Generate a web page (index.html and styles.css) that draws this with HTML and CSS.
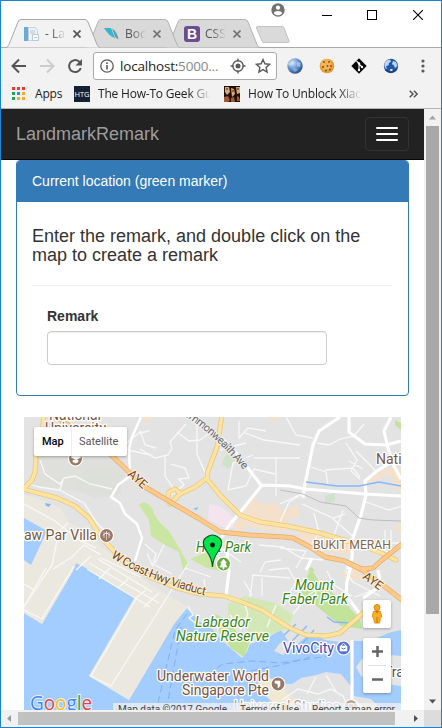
FILE: index.html
```html
<!DOCTYPE html>
<html lang="en">
<head>
<meta charset="utf-8">
<title>LandmarkRemark</title>
<link rel="stylesheet" href="styles.css">
</head>
<body>
<div class="window">
  <header class="titlebar">
    <div class="controls">
      <svg class="account" width="14" height="14" viewBox="0 0 14 14"><circle cx="7" cy="7" r="6.7" fill="#727272"/><circle cx="7" cy="4.7" r="2.1" fill="#fff"/><path d="M2.8 10.2c1-3 7.400-3 8.400 0-2 2.700-6.400 2.700-8.400 0z" fill="#fff"/></svg>
      <svg class="min" width="10" height="10"><path d="M0 5.500h10" stroke="#000"/></svg>
      <svg class="max" width="10" height="10"><rect x=".5" y=".5" width="9" height="9" fill="none" stroke="#000"/></svg>
      <svg class="close" width="10" height="10"><path d="M0 0l10 10M10 0L0 10" stroke="#000" stroke-width="1.100"/></svg>
    </div>
    <div class="tabs">
      <div class="tab active">
        <svg class="shape" width="95" height="29" viewBox="0 0 95 29"><path d="M0 28.500Q2 28 3 25.500L12 3Q13 .5 15 .5H79Q81 .5 82 3L91 25.500Q92 28 94 28.500" fill="#f2f2f2" stroke="#a9a9a9"/></svg>
        <svg class="fav" width="16" height="16" viewBox="0 0 16 16"><path d="M0 1h4v14H0z" fill="#6aaad6"/><path d="M4.500 1.500h7l2 3v10h-9z" fill="#eef2f6" stroke="#c5d0db"/><path d="M6 5h5M6 7h5" stroke="#b9c8d6"/><path d="M8.500 8.500h6v6h-6z" fill="#f8fafc" stroke="#bac7d4"/><path d="M10 11.500h3" stroke="#b9c8d6"/></svg>
        <span class="title">- La</span>
        <svg class="x" width="8" height="8"><path d="M.5.5l7 7M7.500.5l-7 7" stroke="#555" stroke-width="1.700"/></svg>
      </div>
      <div class="tab second">
        <svg class="shape" width="95" height="29" viewBox="0 0 95 29"><path d="M0 28.500Q2 28 3 25.500L12 3Q13 .5 15 .5H79Q81 .5 82 3L91 25.500Q92 28 94 28.500" fill="#d9d9d9" stroke="#b2b2b2"/></svg>
        <svg class="fav" width="16" height="16" viewBox="0 0 16 16"><path d="M0 2h7l4 10C7 11 3 7 0 2z" fill="#35b5d0"/><path d="M8 2.500q5 3 6.500 11l-3-2z" fill="#5b9daa"/></svg>
        <span class="title">Boc</span>
        <svg class="x" width="8" height="8"><path d="M.5.5l7 7M7.500.5l-7 7" stroke="#777" stroke-width="1.700"/></svg>
      </div>
      <div class="tab third">
        <svg class="shape" width="95" height="29" viewBox="0 0 95 29"><path d="M0 28.500Q2 28 3 25.500L12 3Q13 .5 15 .5H79Q81 .5 82 3L91 25.500Q92 28 94 28.500" fill="#d9d9d9" stroke="#b2b2b2"/></svg>
        <span class="fav bs">B</span>
        <span class="title">CSS</span>
        <svg class="x" width="8" height="8"><path d="M.5.5l7 7M7.500.5l-7 7" stroke="#777" stroke-width="1.700"/></svg>
      </div>
      <svg class="newtab" width="36" height="18" viewBox="0 0 36 18"><path d="M3 .5H27Q28.500.5 29 2L34 15Q34.500 16.500 33 16.500H9Q7.500 16.500 7 15L1.500 2Q1 .5 3 .5z" fill="#dadada" stroke="#c2c2c2"/></svg>
    </div>
  </header>

  <div class="toolbar">
    <svg class="nav" width="16" height="16" viewBox="0 0 16 16"><path d="M15 8H2M8 1.500L1.500 8 8 14.500" fill="none" stroke="#555" stroke-width="2"/></svg>
    <svg class="nav" width="16" height="16" viewBox="0 0 16 16"><path d="M1 8h13M8 1.500L14.500 8 8 14.500" fill="none" stroke="#ccc" stroke-width="2"/></svg>
    <svg class="nav" width="16" height="16" viewBox="0 0 16 16"><path d="M13.800 10A6 6 0 1 1 12 3.500L14 5.300" fill="none" stroke="#555" stroke-width="2"/><path d="M15 1v6.500H8.500z" fill="#555"/></svg>
    <div class="omnibox">
      <svg width="14" height="14" viewBox="0 0 14 14"><circle cx="7" cy="7" r="6.200" fill="none" stroke="#5a5a5a" stroke-width="1.300"/><path d="M7 6v4.500M7 3.300v1.600" stroke="#5a5a5a" stroke-width="1.600"/></svg>
      <span class="url">localhost:<i>5000...</i></span>
      <svg class="locate" width="16" height="16" viewBox="0 0 16 16"><circle cx="8" cy="8" r="5.200" fill="none" stroke="#5a5a5a" stroke-width="1.400"/><circle cx="8" cy="8" r="2.500" fill="#5a5a5a"/><path d="M8 .5v3M8 12.500v3M.5 8h3M12.500 8h3" stroke="#5a5a5a" stroke-width="1.400"/></svg>
      <svg class="star" width="16" height="16" viewBox="0 0 16 16"><path d="M8 1.500l1.900 4.300 4.700.5-3.500 3.100 1 4.600L8 11.600 3.900 14l1-4.600L1.400 6.300l4.700-.5z" fill="none" stroke="#5a5a5a" stroke-width="1.400"/></svg>
    </div>
    <svg class="ext" width="16" height="16" viewBox="0 0 16 16"><defs><radialGradient id="gl" cx=".35" cy=".3" r=".75"><stop offset="0" stop-color="#d5e5f8"/><stop offset=".55" stop-color="#638fcf"/><stop offset="1" stop-color="#23498b"/></radialGradient></defs><circle cx="8" cy="8" r="7.700" fill="url(#gl)"/><path d="M1 5l4-2 2 2-3 3-3-1zM10 4l4 1-1 4-3-1z" fill="#d5e5f5" opacity=".5"/><path d="M5 11l3-1 3 2-3 2z" fill="#9fbee4" opacity=".6"/></svg>
    <svg class="ext" width="16" height="16" viewBox="0 0 16 16"><circle cx="8" cy="8" r="7.300" fill="#e39b35"/><circle cx="7" cy="6.500" r="5.500" fill="#f0b355"/><g fill="#87491a"><circle cx="5" cy="4" r=".9"/><circle cx="10" cy="4" r=".9"/><circle cx="4" cy="9" r="1"/><circle cx="8.500" cy="8" r=".9"/><circle cx="12" cy="8" r=".9"/><circle cx="7" cy="12.500" r=".9"/><circle cx="11" cy="11.500" r=".9"/></g></svg>
    <svg class="ext" width="16" height="16" viewBox="0 0 16 16"><path d="M8 .3L15.700 8 8 15.700.3 8z" fill="#050505"/><path d="M5.500 3L8 5.500V12M8 6l3 3" fill="none" stroke="#fff" stroke-width="1.100"/><g fill="#fff"><circle cx="8" cy="5.500" r="1.200"/><circle cx="8" cy="12" r="1.200"/><circle cx="11" cy="9" r="1.200"/></g></svg>
    <svg class="ext" width="16" height="16" viewBox="0 0 16 16"><circle cx="8" cy="8" r="7.200" fill="#2358a8"/><path d="M2 4.500Q4 1.500 7 1.500L8 3.500 6 5 5.500 7.500 3 8 4 11 2 10Q.5 7 2 4.500zM10 3l3 1 1.500 4-2.500 2-1-2.500-2-1.500z" fill="#bcd5ef"/><path d="M7 11l2.500 0 0 2.500-2 1z" fill="#d7e6f6"/><path d="M2.500 12q5.500 4.500 11-.5" stroke="#163d82" fill="none" stroke-width="1.500"/></svg>
    <svg class="dots" width="4" height="14" viewBox="0 0 4 14"><g fill="#5a5a5a"><circle cx="2" cy="2" r="1.600"/><circle cx="2" cy="7" r="1.600"/><circle cx="2" cy="12" r="1.600"/></g></svg>
  </div>

  <div class="bookmarks">
    <svg class="apps" width="13" height="13" viewBox="0 0 13 13"><path d="M0 0h3v3H0zM5 0h3v3H5zM10 0h3v3h-3z" fill="#e83b32"/><path d="M0 5h3v3H0zM0 10h3v3H0z" fill="#20a35b"/><path d="M5 5h3v3H5z" fill="#3c83ef"/><path d="M10 5h3v3h-3zM5 10h3v3H5zM10 10h3v3h-3z" fill="#f5ac25"/></svg>
    <span class="bm b1">Apps</span>
    <span class="htg">HTG</span>
    <span class="bm b2">The How-To Geek Gui</span>
    <svg class="photo" width="16" height="16" viewBox="0 0 16 16"><path fill="#241008" d="M0 0h16v16H0z"/><path d="M1 1h4l1 5-3 3-2-3zM7 2l3 1 1 5-3 3zM12 1h4v6l-3 1z" fill="#d5a877"/><path d="M0 11l4-1 2 4-2 2H0zM7 12l3-1 1 5H7zM13 10l2 1 1 4h-3z" fill="#a05a34"/><path d="M2 3h2M8 5h2M13 3h2" stroke="#361d0e"/></svg>
    <span class="bm b3">How To Unblock Xiaoc</span>
    <svg class="more" width="9" height="8" viewBox="0 0 9 8"><path d="M.7.7L4 4 .7 7.300M4.900.7L8.200 4 4.900 7.300" fill="none" stroke="#555" stroke-width="1.500"/></svg>
  </div>

  <div class="viewport">
    <main class="page">
      <nav class="navbar">
        <span class="brand">LandmarkRemark</span>
        <button class="toggle" aria-label="Menu"><i></i><i></i><i></i></button>
      </nav>
      <section class="panel">
        <div class="heading">Current location (green marker)</div>
        <div class="body">
          <h4>Enter the remark, and double click on the map to create a remark</h4>
          <hr>
          <div class="group">
            <label for="remark">Remark</label>
            <input id="remark" type="text">
          </div>
        </div>
      </section>
      <div class="map">
        <svg class="canvas" width="377" height="293" viewBox="24 417 377 293">
          <rect x="24" y="417" width="377" height="293" fill="#a3ccff"/>
          <path d="M24 417H401V630L388 633 370 641 352 641 350 646 340 642 325 640 311 633 302 640 293 648 283 655 274 651 280 643 288 641 281 630 263 640 250 644 247 652 242 658 235 652 221 640 211 627 200 622 193 614 186 608 174 624 129 700 89 676 135 597 85 568 76 563 73 571 42 624 24 613Z" fill="#e3e3e3"/>
          <path d="M24 495L37 498 62 509 68 522 88 532 99 545 125 565 151 585 188 607 174 624 129 700 89 676 135 597 85 568 76 563 73 571 42 624 24 613Z" fill="#ebe9df"/>
          <path d="M45 417L111 456 126 473 111 496 92 490 60 490 28 485 36 464Z" fill="#dfe0db"/>
          <path d="M24 518L47 531 31 565 24 560ZM76 563L90 570 103 582 83 569Z" fill="#a3ccff"/>
          <path d="M45 503l6 1-2 3-3-1zM193 509l5-2-1 3z" fill="#86b8f8"/>
          <!-- parks -->
          <path d="M139 505Q144 499 152 508Q155 520 169 531L181 551 189 566 183 570 179 552 165 545 151 536 149 520ZM190 559L207 552 220 571 207 568Z" fill="#cbe6a3"/>
          <path d="M224 458l4-4 8 1 -3 10-5 4-6-5zM325 496l10-3 0 8-10 3z" fill="#cfe3cc"/>
          <path d="M228 604L245 596 275 603 293 615 289 628 263 637 250 632 228 616Z" fill="#d3e8b6"/>
          <path d="M215 614L224 618 239 634 250 641 244 657 231 648 220 633ZM311 568L319 582 334 594 345 603 360 619 362 629 341 626 320 609 300 592ZM395 420l6 3v7l-6-5zM312 567l3 4-8-1z" fill="#c2e39a"/>
          <!-- commercial areas -->
          <path d="M209 504Q223 505 232 517L239 528 222 527 208 519Z" fill="#f4e4ed"/>
          <path d="M139 417h14l-4 7zM265 417h14l-3 6zM242 511l8-8 2-10 8 12 14-3 9 10 7 19-27-1-16-4-11 7-3-8 14-11zM280 512l17-7 4 10-15 5zM298 528l40 8 19 9-5 10-27-3-26-15zM364 481l24-13 13 0v25l-8-9-4-10-22 10zM394 528l7-5v11zM340 575l14-8 10 11-12 4zM72 419l10-2-1 5z" fill="#f5e1cb"/>
          <path d="M87 470h34l0 24-25 5-22-10z" fill="#dcddd8" opacity=".5"/>
          <!-- islands -->
          <path d="M257 675L270 678 281 684 292 684 301 678 316 675 326 672 341 674 350 685 354 696 371 699 382 710H283L270 697 260 690Z" fill="#e3e3e3"/>
          <path d="M257 675l13 3 10 7 9 10 18 15h-27l-17-17z" fill="#f1e8d1"/>
          <path d="M356 667L362 659 378 654 401 656V686L380 683 361 676Z" fill="#e5e5e5"/>
          <!-- minor streets -->
          <g fill="none" stroke="#f8f8f8" stroke-width="1.300">
            <path d="M40 460l5 14 15 10 4-6 11-2 15 8 22 5M60 490l3-10M29 484l10 3 20 3 25 13 13 20 16 17M24 504l31 17 24 19 17 8M68 523l-9 8-7 34-27 40"/>
            <path d="M140 449l15 9 13-3 4-7-2-6 16-18M165 456v20l9 13-3 6 13-10-5-6 10-1-4-10-14-4M177 432l12 9 11-1 12-9M197 417v37l8 18M239 421v17l9-10 18 3M253 455l-20 8-5 27 18-4 8-17 21 5M220 450l26-7M276 458v38M245 433l19 7 36 5M300 458h-46M286 417l10 18 17 3M317 443l12 2 11-6 14-3 10-12M311 467l15 5 2 14M325 470l28-2 7 9M346 443l11 17-6 11 9 8M356 451l20 20M363 469l-14-8M304 493l-15 9-9 20M302 504l31 14 12-4M314 513l5 20-9 14M333 519l22 19M343 510l-10 28-13 14M280 504l21-10M363 501l26 9 12-4M385 530v20l12 10M391 530v28M380 543h21M280 548l26 3-10 17M259 545l24 2 18 11 23 2M281 560l-16 2-5 10M241 562l-26-18"/>
            <path d="M250 597l3-22 37 3M262 578v18M269 570l19-2 8 14-12 20M141 433l4 12 11 3M128 450l23 5M139 433l10-2M127 443l14-12M145 544l11 10-3 10 19 10M164 545l-9 18M153 567l-6-14M204 579l2 17M185 568l26 9M227 569l-10-14"/>
            <path d="M101 555l-17-10-12 12-19 12M87 569l63 38M89 563l70 40M98 559l54 33M91 556l-15 14M110 568l-11 11M128 579l-10 9M146 590l-10 8M101 558l40 19M24 610l18 9 32-53M46 568l-22 39M24 584l10 6M136 599l-45 77 20 10 77-122M159 593l-15 14M188 606l5 9-4 3 6 5M243 600l5 14-7 15-11-14M252 595l-8-14M276 605l-9 22M303 578l11 6 2 10-14 10M327 571l7 14 18 11M345 570l8 12 27 14M355 597l31-12M293 614l15-18M316 590l-12 8"/>
            <path d="M282 700l16-11 20 5 13-5 12 7 6 14M316 677l-9 17M326 675l11 18"/>
          </g>
          <g fill="none" stroke="#fff" stroke-width="3.200" stroke-linejoin="round">
            <path stroke-width="2.400" d="M141 417l-9 20-3 12 1 27-12 9-7 12 9 6 5 11 12 10 5 14-7 23"/>
            <path d="M189 417l29 18 15 14 28 36M261 485l29 1 15 3 60 5 36 2M262 485l-20 25-12 14-9 14M340 417l-21 14-6 14-9 44-1 9M349 417l0 15 16 12 21 1 15-4M391 417l-7 14 4 17 6 18 7 13M401 456l-24 15-12 10 1 14-5 20-8 23-1 20-5 11M228 542l-1 17 2 12-3 25M312 558l-6 12M351 565l-4 17-1 13 16 22M378 570l3 16-18 12M352 640v60l10 8"/>
          </g>
          <g fill="none" stroke="#86b8f8" stroke-width="1.400"><path d="M306 482l31 4 22 0 20-4 22 4M284 635l12-11M292 641l15-15M301 645l13-15M327 617l7 5 17 1"/></g>
          <path d="M280 490l23 4 17 8 26 4 13 12 14 2 28 1" fill="none" stroke="#bdbdbd"/>
          <!-- highways -->
          <g fill="none" stroke-linecap="round" stroke-linejoin="round">
            <path stroke="#e9c878" stroke-width="5" d="M44 415l-2 19-6 22-1 16-3 8-9 9 34 9 18 8 14 12 12 19 21 23 30 18 25 10 23 6 24 2 18 6 20 8 26 17 18 8 20 1 14-3 23-20 10-7M222 415l-5 32-9 24-1 8 13 16 20 20 20 7 28 4 32 7 34 10 25 9 17 8M207 478l-12 9-15 7-10 10M167 500l2-8 6-3 5 4"/>
            <path stroke="#ffe3a0" stroke-width="3.500" d="M44 415l-2 19-6 22-1 16-3 8-9 9 34 9 18 8 14 12 12 19 21 23 30 18 25 10 23 6 24 2 18 6 20 8 26 17 18 8 20 1 14-3 23-20 10-7M222 415l-5 32-9 24-1 8 13 16 20 20 20 7 28 4 32 7 34 10 25 9 17 8M207 478l-12 9-15 7-10 10M167 500l2-8 6-3 5 4"/>
            <path stroke="#e6ad6c" stroke-width="5" d="M56 417l23 15 31 22 19 18 16 15 27 16 26 15 22 14 30 3 34 2 9 1 17 9 15 10 20 4 17 8 11-1 9-8 20-16M348 563l16 8 24 18 14 11"/>
            <path stroke="#ffc989" stroke-width="3.500" d="M56 417l23 15 31 22 19 18 16 15 27 16 26 15 22 14 30 3 34 2 9 1 17 9 15 10 20 4 17 8 11-1 9-8 20-16M348 563l16 8 24 18 14 11"/>
          </g>
          <g fill="none" stroke="#80b0ef" stroke-dasharray="7 4"><path d="M187 614l-12 16-17 73M181 627l-14 80M199 681l24-17 29-3 28 2 29-4 20-3M251 671l30-6 29-8"/></g>
          <!-- place names -->
          <g class="place brown"><text x="49" y="420" textLength="52">National</text><text x="45" y="433" textLength="61">University</text><text x="24" y="540" textLength="73" lengthAdjust="spacingAndGlyphs">aw Par Villa</text><text x="376" y="464">National</text><text x="157" y="681" textLength="112" lengthAdjust="spacingAndGlyphs">Underwater World</text><text x="182" y="695" textLength="87" lengthAdjust="spacingAndGlyphs">Singapore Pte</text></g>
          <text class="place district" x="313" y="549" textLength="78" lengthAdjust="spacingAndGlyphs">BUKIT MERAH</text>
          <g class="place green"><text x="196" y="552" textLength="55" lengthAdjust="spacingAndGlyphs">Hort Park</text><text x="295" y="590" textLength="39" lengthAdjust="spacingAndGlyphs">Mount</text><text x="282" y="604" textLength="66" lengthAdjust="spacingAndGlyphs">Faber Park</text><text x="195" y="627" textLength="55" lengthAdjust="spacingAndGlyphs">Labrador</text><text x="176" y="641" textLength="93" lengthAdjust="spacingAndGlyphs">Nature Reserve</text></g>
          <text class="place viv" x="283" y="653" textLength="51" lengthAdjust="spacingAndGlyphs">VivoCity</text>
          <text class="place studio" x="234" y="711" textLength="106">Universal Studios</text>
          <text class="place dark" x="384" y="677">Tra</text>
          <defs><path id="coast" d="M111 557Q142 579 207 596"/><path id="commonwealth" d="M178 412Q212 431 246 473"/></defs>
          <text class="road"><textPath href="#coast" textLength="102">W Coast Hwy Viaduct</textPath></text>
          <text class="road gray"><textPath href="#commonwealth" textLength="88">Commonwealth Ave</textPath></text>
          <text class="road" transform="translate(127 475) rotate(42)">AYE</text><text class="road" transform="translate(362 578) rotate(36)">AYE</text>
          <!-- place badges -->
          <g stroke="#fff" stroke-width="1.200"><circle cx="75.500" cy="459" r="7" fill="#997766"/><circle cx="106.500" cy="535.500" r="7" fill="#997766"/><circle cx="278" cy="684" r="7" fill="#997766"/><circle cx="351" cy="706" r="6.500" fill="#b9a69d"/><circle cx="223.500" cy="564" r="7" fill="#69a83b"/><circle cx="343.500" cy="648" r="7" fill="#5670d8"/></g>
          <path d="M71 457l5-3 5 3-5 3zM73 460v2q3 2 5 0v-2M275 681h5v5l-2 2v-4l-3-1zM223.500 559l3 4h-1.500l2 4h-3v2h-1v-2h-3l2-4h-1.500zM340 646h7v5h-7zM104 532v6M106.500 531v9M109 532v6" fill="#fff" stroke="#fff" stroke-width=".6"/>
          <path d="M103 535.500q3.500-5 7 0" fill="none" stroke="#fff"/>
          <path d="M341.500 646v-1q2-3 4 0v1" fill="none" stroke="#fff"/><path d="M341.500 648q2 2 4 0" fill="none" stroke="#5670d8"/>
          <circle cx="351" cy="706" r="3" fill="none" stroke="#fff"/>
          <!-- current location pin -->
          <path d="M212.500 567Q212 558 206.500 551Q200 541 207 537Q212.500 533 218 537Q225 541 218.500 551Q213 558 212.500 567Z" fill="#00e64d" stroke="#07531f" stroke-width="1.200"/><circle cx="212.500" cy="545" r="2.400" fill="#111"/>
          <text class="google" x="30" y="709.500" textLength="62" lengthAdjust="spacingAndGlyphs"><tspan fill="#4285f4">G</tspan><tspan fill="#ea4335">o</tspan><tspan fill="#fbbc05">o</tspan><tspan fill="#4285f4">g</tspan><tspan fill="#34a853">l</tspan><tspan fill="#ea4335">e</tspan></text>
          <rect x="113" y="703" width="288" height="7" fill="#f5f5f5" opacity=".7"/>
          <g class="legal"><text x="118" y="713" textLength="109">Map data ©2017 Google</text><text x="240" y="713" textLength="59">Terms of Use</text><text x="312" y="713" textLength="83">Report a map error</text></g>
        </svg>
        <div class="maptype"><b>Map</b><span>Satellite</span></div>
        <div class="mapcontrols">
          <div class="pegman"><svg width="14" height="22" viewBox="0 0 14 22"><circle cx="7" cy="4.500" r="3" fill="#f5a91d" stroke="#c98918"/><path d="M3.500 8.500Q7 6.500 10.500 8.500L11.800 14 10.300 15 9.600 20H4.400L3.700 15 2.200 14Z" fill="#fbb11f" stroke="#dc9418"/><path d="M5 8h4L7 10.500z" fill="#e55b27"/><path d="M7 14v6" stroke="#b8750e"/></svg></div>
          <div class="zoom"><svg width="28" height="55" viewBox="0 0 28 55"><path d="M9 13.500h11M14.500 8v11M9 41.500h11" stroke="#666" stroke-width="2.500"/><path d="M5 27.500h18" stroke="#e0e0e0"/></svg></div>
        </div>
      </div>
    </main>
    <div class="vscroll"><svg width="17" height="17"><path d="M5 10.500l3.500-4 3.500 4z" fill="#a3a3a3"/></svg><div class="vthumb"></div><svg width="17" height="17"><path d="M5 6.500l3.500 4 3.500-4z" fill="#505050"/></svg></div>
    <div class="hscroll"><svg width="17" height="17"><path d="M10 5L6 8.500l4 3.500z" fill="#9a9a9a"/></svg><div class="hthumb"></div><svg width="17" height="17"><path d="M7 5l4 3.500L7 12z" fill="#505050"/></svg></div>
    <div class="corner"></div>
  </div>
</div>
</body>
</html>
```
FILE: styles.css
```css
* { box-sizing: border-box; }
body { margin: 0; background: #fff; font-family: "Liberation Sans", Arial, sans-serif; }
svg { display: block; flex: none; }
.window { width: 442px; height: 728px; display: flex; flex-direction: column; border: 1px solid #1883d7; overflow: hidden; background: #f2f2f2; }

.titlebar { height: 47px; flex: none; background: #fff; border-bottom: 1px solid #a9a9a9; }
.controls { height: 18px; display: flex; justify-content: flex-end; padding: 9px 18px 0 0; }
.account { margin: -7px 37px 0 0; }
.min, .max { margin-right: 35px; }
.max { margin-right: 36px; }
.tabs { display: flex; height: 29px; padding-left: 5px; }
.tab { position: relative; flex: none; display: flex; align-items: center; width: 95px; height: 29px; padding-left: 18px; margin-right: -15px; z-index: 1; font: 12px "Open Sans", "Noto Sans", sans-serif; color: #555; }
.tab.active { z-index: 3; }
.tab.second { z-index: 2; }
.shape { position: absolute; left: 0; top: 0; z-index: -1; }
.fav { width: 16px; height: 16px; margin-right: 5px; flex: none; }
.bs { border-radius: 3px; background: #6b4d91; color: #fff; text-align: center; font: bold 14px/16px "Liberation Sans", sans-serif; }
.title { width: 21px; margin-right: 7px; overflow: hidden; white-space: nowrap; -webkit-mask-image: linear-gradient(90deg, #000 35%, transparent); mask-image: linear-gradient(90deg, #000 35%, transparent); }
.newtab { margin: 7px 0 0 9px; }

.toolbar { height: 35px; flex: none; display: flex; align-items: center; padding: 0 10px; }
.nav { margin-right: 12px; }
.nav:nth-child(3) { margin-right: 10px; }
.omnibox { width: 184px; height: 28px; display: flex; align-items: center; padding-left: 6px; margin-right: 10px; border: 1px solid #aaa; border-radius: 3px; background: #fff; }
.url { width: 99px; margin-left: 6px; white-space: nowrap; color: #222; font: 13.5px/20px "Open Sans", "Noto Sans", sans-serif; letter-spacing: -.2px; }
.url i { font-style: normal; color: #888; }
.locate { margin-left: 11px; }
.star { margin-left: 9px; }
.ext { margin-right: 16px; }
.dots { margin-left: 6px; }

.bookmarks { height: 26px; flex: none; display: flex; align-items: center; padding: 0 0 4px 11px; border-bottom: 1px solid #b5b5b5; }
.bm { overflow: hidden; white-space: nowrap; color: #222; font: 12px/20px "Open Sans", "Noto Sans", sans-serif; letter-spacing: -.2px; }
.b1 { width: 30px; margin: 0 9px 0 10px; }
.b2, .b3 { width: 113px; margin-left: 8px; -webkit-mask-image: linear-gradient(90deg, #000 80%, transparent); mask-image: linear-gradient(90deg, #000 80%, transparent); }
.htg { width: 16px; height: 16px; flex: none; background: #152235; color: #fff; text-align: center; font: 7.5px/16px "Open Sans", sans-serif; }
.photo { margin-left: 13px; }
.more { margin-left: 48px; }

.viewport { flex: 1; min-height: 0; display: grid; grid-template: 601px 17px / 423px 17px; }
.page { overflow: hidden; background: #fff; }
.navbar { height: 51px; display: flex; align-items: center; justify-content: space-between; padding: 0 15px; background: #222; border-bottom: 1px solid #080808; }
.brand { color: #9d9d9d; font-size: 18px; line-height: 20px; }
.toggle { width: 44px; height: 34px; padding: 9px 10px; display: flex; flex-direction: column; gap: 4px; background: transparent; border: 1px solid #333; border-radius: 4px; }
.toggle i { width: 22px; height: 2px; border-radius: 1px; background: #fff; }
.panel { margin: 0 15px; height: 236px; border: 1px solid #337ab7; border-radius: 4px; overflow: hidden; color: #333; }
.heading { height: 41px; padding: 10px 15px; background: #337ab7; color: #fff; font-size: 14px; line-height: 20px; }
.body { padding: 25px 16px 0 15px; }
h4 { margin: 0; font-size: 18px; line-height: 19px; font-weight: 500; }
hr { margin: 20px 0; border: 0; border-top: 1px solid #eee; }
.group { padding-left: 15px; }
label { display: block; margin-bottom: 5px; font-weight: 700; font-size: 14px; line-height: 20px; }
input { display: block; width: 280px; height: 34px; border: 1px solid #ccc; border-radius: 4px; box-shadow: inset 0 1px 1px rgba(0,0,0,.075); }

.map { position: relative; width: 377px; height: 293px; margin: 21px 0 0 23px; font-family: Roboto, sans-serif; }
.place { font-size: 14px; paint-order: stroke; stroke: #fff; stroke-width: 2.5px; stroke-linejoin: round; }
.brown { fill: #785544; }
.district { fill: #7d6751; font-size: 12.5px; }
.green { fill: #3a8518; font-style: italic; }
.viv { fill: #3d47b7; }
.studio { fill: #aaa19d; }
.dark { fill: #555; }
.road { font-size: 12px; fill: #704624; paint-order: stroke; stroke: #fff0d7; stroke-width: 2px; }
.gray { font-size: 11px; fill: #666; stroke: #eee; }
.google { font: 500 20px "Open Sans", sans-serif; paint-order: stroke; stroke: #e8f1ff; stroke-width: 2px; }
.legal { font-size: 10px; fill: #444; }
.maptype { position: absolute; left: 10px; top: 10px; width: 93px; height: 29px; display: flex; align-items: center; background: #fff; border-radius: 2px; box-shadow: 0 1px 3px rgba(0,0,0,.3); font-size: 11px; }
.maptype b { width: 38px; padding-left: 8px; color: #000; font-weight: 500; line-height: 29px; border-right: 1px solid #eee; }
.maptype span { padding-left: 7px; color: #565656; }
.mapcontrols { position: absolute; right: 10px; top: 183px; display: flex; flex-direction: column; gap: 10px; }
.pegman, .zoom { width: 28px; background: #fff; border-radius: 2px; box-shadow: 0 1px 3px rgba(0,0,0,.3); }
.pegman { height: 28px; display: flex; align-items: center; justify-content: center; }
.zoom { height: 55px; }

.vscroll { display: flex; flex-direction: column; background: #f1f1f1; }
.vthumb { width: 13px; height: 488px; margin: 0 2px auto; background: #a8a8a8; }
.hscroll { display: flex; background: #f1f1f1; }
.hthumb { width: 377px; height: 13px; margin: 2px auto 2px 0; background: #c1c1c1; }
.corner { background: #dcdcdc; }
```
